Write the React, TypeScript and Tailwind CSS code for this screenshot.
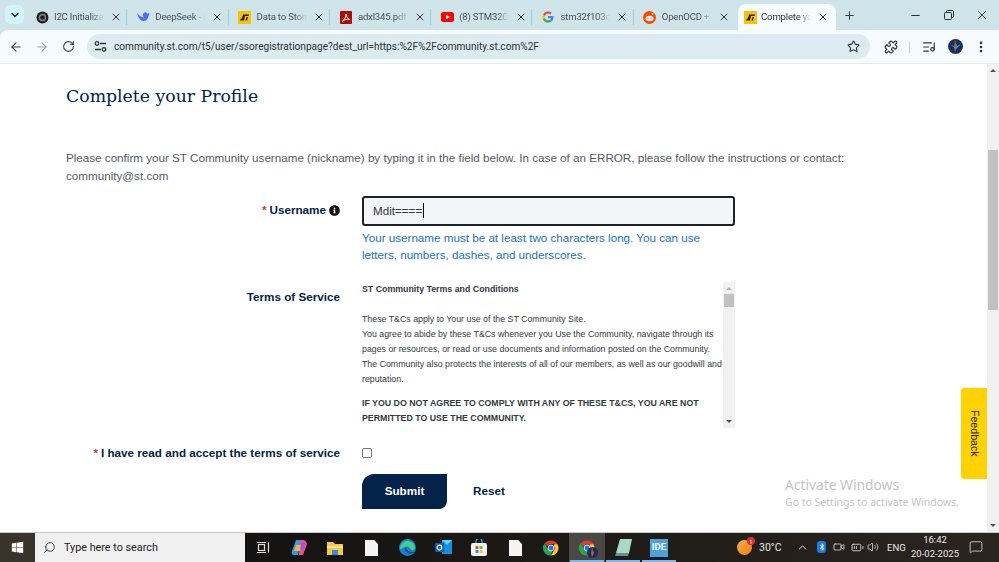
import React from 'react';
import {
  ArrowLeft, ArrowRight, ChevronDown, ChevronUp, ListMusic, Minus, MoreVertical, Plus, Puzzle,
  RotateCw, Search, Star, Volume2, X, MessageSquare, Video, BatteryMedium,
} from 'lucide-react';
import { FaInfoCircle, FaBluetoothB, FaWindows } from 'react-icons/fa';

const StLogo = () => (
  <svg width="13" height="13" viewBox="0 0 13 13">
    <rect width="13" height="13" fill="#f5c400" />
    <path d="M2 9.5 L6 9.5 L7 5 L10.5 5 L11 3.5 L5 3.5 L4 7.5 L3 7.5Z M7.5 9.5 L9 9.5 L10 6 L8.5 6Z" fill="#1c1c1c" />
  </svg>
);

const ChromeLogo = ({ size = 18 }: { size?: number }) => (
  <svg width={size} height={size} viewBox="0 0 24 24">
    <path d="M12 2a10 10 0 0 1 8.66 5H12a5 5 0 0 0-4.6 3L3.6 5.6A10 10 0 0 1 12 2z" fill="#e33b2e" />
    <path d="M20.66 7A10 10 0 0 1 12 22l4.3-7.5A5 5 0 0 0 16 9.5L16.3 7z" fill="#fcc934" />
    <path d="M3.6 5.6 7.9 13a5 5 0 0 0 6 2.4L12 22A10 10 0 0 1 3.6 5.6z" fill="#2ba24c" />
    <circle cx="12" cy="12" r="4.2" fill="#fff" />
    <circle cx="12" cy="12" r="3.3" fill="#1a73e8" />
  </svg>
);

const tabs = [
  {
    title: 'I2C Initializat',
    icon: (
      <svg width="13" height="13" viewBox="0 0 13 13">
        <circle cx="6.5" cy="6.5" r="6" fill="#1d1d1d" />
        <circle cx="6.5" cy="6.5" r="3" fill="none" stroke="#8a8a8a" strokeWidth="1.4" />
      </svg>
    ),
  },
  {
    title: 'DeepSeek - I',
    icon: (
      <svg width="14" height="12" viewBox="0 0 14 12">
        <path d="M1 2c1 3 2 7 6 8 3 .5 5-2 5.5-5 .3-1.500 1-2 1-3-1 .6-2 .6-2.500.2C10 1 8.500 1 7.500 2.500 6 4 7 6 8.500 6 7 7 4 6 1 2z" fill="#4d6bfe" />
      </svg>
    ),
  },
  { title: 'Data to Store', icon: <StLogo /> },
  {
    title: 'adxl345.pdf',
    icon: (
      <svg width="12" height="13" viewBox="0 0 12 13">
        <rect width="12" height="13" rx="1" fill="#b30b00" />
        <path d="M2.500 10c2-1 3.500-4 3.500-7 .5 3 2 5 3.500 5.500C7.500 8 4.500 8.500 2.500 10z" fill="none" stroke="#fff" strokeWidth="1" />
      </svg>
    ),
  },
  {
    title: '(8) STM32Cu',
    icon: (
      <svg width="13" height="10" viewBox="0 0 13 10">
        <rect width="13" height="10" rx="2.500" fill="#f00" />
        <path d="M5 2.800 9 5 5 7.200z" fill="#fff" />
      </svg>
    ),
  },
  {
    title: 'stm32f103c8',
    icon: (
      <svg width="12" height="12" viewBox="0 0 24 24">
        <path d="M23 12.300c0-.9-.1-1.600-.2-2.300H12v4.300h6.200c-.3 1.400-1.100 2.600-2.300 3.400l3.600 2.800c2.200-2 3.500-5 3.500-8.200z" fill="#4285f4" />
        <path d="M12 23c3 0 5.500-1 7.500-2.700l-3.600-2.800c-1 .7-2.300 1.100-3.900 1.100-3 0-5.500-2-6.400-4.700l-3.700 2.900C4.100 20.500 7.800 23 12 23z" fill="#34a853" />
        <path d="M5.600 13.900a6.800 6.800 0 0 1 0-4.200L1.900 6.800a11 11 0 0 0 0 10z" fill="#fbbc05" />
        <path d="M12 5.200c1.700 0 3.200.6 4.300 1.700l3.200-3.200C17.500 2 15 1 12 1 7.800 1 4.100 3.500 2.300 7l3.700 2.900C6.500 7.200 9 5.200 12 5.200z" fill="#ea4335" />
      </svg>
    ),
  },
  {
    title: 'OpenOCD +',
    icon: (
      <svg width="13" height="13" viewBox="0 0 13 13">
        <circle cx="6.500" cy="6.500" r="6.500" fill="#ff4500" />
        <ellipse cx="6.500" cy="7.500" rx="4" ry="2.800" fill="#fff" />
        <circle cx="5" cy="7" r=".7" fill="#ff4500" />
        <circle cx="8" cy="7" r=".7" fill="#ff4500" />
        <circle cx="9.500" cy="3" r=".9" fill="#fff" />
      </svg>
    ),
  },
];

const Tab = ({ title, icon, last }: { title: string; icon: React.ReactNode; last: boolean }) => (
  <div className="relative flex h-[26px] w-[101.3px] shrink-0 items-center pl-[9px] text-[#4a5357]">
    <div className="flex w-[14px] shrink-0 justify-center">{icon}</div>
    <span className="ml-[5px] w-[50px] whitespace-nowrap text-[9.600px] tracking-[-0.2px] [mask-image:linear-gradient(to_right,black_75%,transparent)]">
      {title}
    </span>
    <X size={12} strokeWidth={2} className="ml-[6px] shrink-0 text-[#2d3336]" />
    {!last && <div className="absolute right-0 top-[5px] h-[16px] w-[1px] bg-[#8fd0e4]" />}
  </div>
);

const TabStrip = () => (
  <div className="flex h-[30px] items-end font-['Roboto',sans-serif]">
    <div className="mb-[6px] ml-[5px] mr-[2px] flex h-[19px] w-[19px] shrink-0 items-center justify-center rounded-md bg-[#d3f4fd]">
      <ChevronDown size={12} strokeWidth={2.5} className="text-[#1f2a2e]" />
    </div>
    {tabs.map((t, i) => (
      <Tab key={t.title} title={t.title} icon={t.icon} last={i === tabs.length - 1} />
    ))}
    <div className="ml-[3px] flex h-[26px] w-[98px] shrink-0 items-center rounded-t-lg bg-[#f6fbfd] pl-[6px] text-[#30383b]">
      <StLogo />
      <span className="ml-[4px] w-[50px] whitespace-nowrap text-[9.600px] tracking-[-0.2px] [mask-image:linear-gradient(to_right,black_75%,transparent)]">
        Complete yo
      </span>
      <X size={12} strokeWidth={2} className="ml-[6px] shrink-0" />
    </div>
    <div className="flex h-[30px] w-[26px] items-center justify-center text-[#333b3f]">
      <Plus size={13} strokeWidth={2} />
    </div>
    <div className="flex h-[30px] flex-1 items-center justify-end text-[#2b3134]">
      <div className="flex w-[33.600px] justify-center"><Minus size={13} /></div>
      <div className="flex w-[33.600px] justify-center">
        <svg width="10" height="10" viewBox="0 0 10 10" fill="none" stroke="currentColor">
          <rect x=".5" y="2.500" width="7" height="7" rx="1" />
          <path d="M2.500 2.500V1.500a1 1 0 0 1 1-1h5a1 1 0 0 1 1 1v5a1 1 0 0 1-1 1h-1" />
        </svg>
      </div>
      <div className="flex w-[33.600px] justify-center"><X size={14} strokeWidth={1.500} /></div>
    </div>
  </div>
);

const Toolbar = () => (
  <div className="flex h-[34px] items-center rounded-tl-lg border-b border-[#e4eaec] bg-[#f6fbfd] font-['Roboto',sans-serif]">
    <ArrowLeft size={14} strokeWidth={2} className="ml-[9px] text-[#3b4346]" />
    <ArrowRight size={14} strokeWidth={2} className="ml-[12px] text-[#9aa3a6]" />
    <RotateCw size={13} strokeWidth={2} className="ml-[13px] text-[#3b4346]" />
    <div className="ml-[12px] flex h-[25px] w-[783px] shrink-0 items-center rounded-full bg-[#dcebef] pl-[7px] pr-[10px]">
      <svg width="13" height="11" viewBox="0 0 13 11" fill="none" stroke="#2f3639" strokeWidth="1.300">
        <circle cx="3" cy="2.500" r="1.800" />
        <path d="M6 2.500h6M1 8.500h6" />
        <circle cx="10" cy="8.500" r="1.800" />
      </svg>
      <span className="ml-[7px] text-[10.100px] whitespace-nowrap text-[#2b3236]">
        community.st.com/t5/user/ssoregistrationpage?dest_url=https:%2F%2Fcommunity.st.com%2F
      </span>
      <Star size={13} strokeWidth={2} className="ml-auto text-[#2b3236]" />
    </div>
    <Puzzle size={14} strokeWidth={2} className="ml-[14px] shrink-0 text-[#2f3639]" />
    <div className="ml-[11px] h-[12px] w-[1px] shrink-0 bg-[#a9e0f0]" />
    <ListMusic size={14} strokeWidth={2} className="ml-[12px] shrink-0 text-[#2f3639]" />
    <svg width="15" height="15" viewBox="0 0 15 15" className="ml-[12px] shrink-0">
      <circle cx="7.500" cy="7.500" r="7.500" fill="#15305f" />
      <path d="M7 1 9 7 7 14 6 8z" fill="#c2572e" />
      <path d="M2 5l5 3 6-3-5 5z" fill="#3aa0d8" />
    </svg>
    <MoreVertical size={14} strokeWidth={2.500} className="ml-[11px] shrink-0 text-[#2f3639]" />
  </div>
);

const TermsBox = () => (
  <div className="flex h-[146px] w-[373px] overflow-hidden font-['Liberation_Sans',sans-serif] text-[8.800px] leading-[15px] text-[#333a40]">
    <div className="w-[361px] shrink-0 overflow-hidden">
      <p className="mb-[15px] font-bold">ST Community Terms and Conditions</p>
      <p className="mb-[9px]">
        These T&amp;Cs apply to Your use of the ST Community Site.
        <br />
        You agree to abide by these T&amp;Cs whenever you Use the Community, navigate through its pages or resources, or read or use documents and information posted on the Community. The Community also protects the interests of all of our members, as well as our goodwill and reputation.
      </p>
      <p className="font-bold">IF YOU DO NOT AGREE TO COMPLY WITH ANY OF THESE T&amp;CS, YOU ARE NOT PERMITTED TO USE THE COMMUNITY.</p>
    </div>
    <div className="flex w-[12px] shrink-0 flex-col items-center bg-[#f1f1f1]">
      <div className="mt-[5px] h-0 w-0 border-x-[3px] border-b-[3px] border-x-transparent border-b-[#b5b5b5]" />
      <div className="mt-[4px] h-[13px] w-[10px] bg-[#c1c1c1]" />
      <div className="mb-[5px] mt-auto h-0 w-0 border-x-[3px] border-t-[3px] border-x-transparent border-t-[#505050]" />
    </div>
  </div>
);

const Form = () => (
  <div className="grid grid-cols-[274px_373px] gap-x-[22px] pt-[11px] font-['Liberation_Sans',sans-serif] text-[11.700px] text-[#03234b]">
    <label className="flex h-[30px] items-center justify-end pb-[2px] font-bold">
      <span className="mr-[3px] text-[#c0392b]">*</span>Username
      <FaInfoCircle size={11} className="ml-[3px] text-[#111]" />
    </label>
    <div className="flex h-[30px] items-center rounded-[3px] border-2 border-[#1c232b] bg-[#f3f5f6] pb-[1px] pl-[9px] text-[11.650px] text-[#30373d]">
      Mdit====<span className="ml-[0.5px] h-[15px] w-[1px] bg-black" />
    </div>
    <div />
    <p className="mt-[3px] h-[53px] text-[11.650px] leading-[17px] text-[#1c6fc2]">
      Your username must be at least two characters long. You can use letters, numbers, dashes, and underscores.
    </p>
    <label className="pt-[7px] text-right font-bold leading-[16px]">Terms of Service</label>
    <TermsBox />
    <label className="mt-[17px] flex h-[16px] items-center justify-end font-bold">
      <span className="mr-[3px] text-[#c0392b]">*</span>I have read and accept the terms of service
    </label>
    <div className="mt-[17px] flex h-[16px] items-center">
      <div className="h-[10px] w-[10px] rounded-[2px] border border-[#767676] bg-white" />
    </div>
    <div />
    <div className="mt-[13px] flex items-center">
      <button className="h-[35px] w-[85px] rounded-tl-[12px] rounded-br-[8px] bg-[#03234b] pb-[2px] font-bold text-white">Submit</button>
      <span className="ml-[26px] pb-[2px] font-bold">Reset</span>
    </div>
  </div>
);

const Page = () => (
  <div className="relative flex h-[468px] overflow-hidden bg-white">
    <div className="flex-1 pl-[66px]">
      <h1 className="pt-[19px] font-['DejaVu_Serif',serif] text-[17.300px] leading-[26px] text-[#03234b]">
        Complete your Profile
      </h1>
      <p className="mt-[40px] w-[800px] font-['Liberation_Sans',sans-serif] text-[11.650px] leading-[18px] text-[#525a63]">
        Please confirm your ST Community username (nickname) by typing it in the field below. In case of an ERROR, please follow the instructions or contact: community@st.com
      </p>
      <Form />
    </div>
    <div className="flex w-[12px] shrink-0 flex-col items-center bg-[#f1f1f1]">
      <div className="mt-[5px] h-0 w-0 border-x-[3px] border-b-[3px] border-x-transparent border-b-[#505050]" />
      <div className="mt-[78px] h-[160px] w-[10px] bg-[#c1c1c1]" />
      <div className="mb-[5px] mt-auto h-0 w-0 border-x-[3px] border-t-[3px] border-x-transparent border-t-[#505050]" />
    </div>
    <div className="absolute right-[12px] top-[324px] flex h-[91px] w-[26px] items-center justify-center rounded-l-[3px] bg-[#ffd200] font-['Liberation_Sans',sans-serif] text-[10.600px] text-[#222] [writing-mode:vertical-rl]">
      Feedback
    </div>
    <div className="absolute left-[785px] top-[411px] font-['Noto_Sans',sans-serif] text-[#c4c4c4]">
      <div className="text-[13.800px] leading-[19px]">Activate Windows</div>
      <div className="text-[10.500px] leading-[16px]">Go to Settings to activate Windows.</div>
    </div>
  </div>
);

const TaskIcon = ({ children, active, running }: { children: React.ReactNode; active?: boolean; running?: boolean }) => (
  <div className={`relative flex h-[29px] w-[36px] shrink-0 items-center justify-center ${active ? 'bg-[#4b4743]' : ''}`}>
    {children}
    {running && <div className="absolute bottom-0 left-[1px] right-[1px] h-[2px] bg-[#76b9ed]" />}
  </div>
);

const DocIcon = () => (
  <svg width="13" height="16" viewBox="0 0 13 16"><path d="M0 0h9l4 4v12H0z" fill="#f4f4f4" /></svg>
);

const Taskbar = () => (
  <div className="flex h-[30px] border-t border-[#c9c9c9] bg-gradient-to-r from-[#0f0f0f] via-[#1b1815] to-[#2b2520] font-['Roboto',sans-serif] text-[#e8e8e8]">
    <div className="flex h-[29px] w-[35px] shrink-0 items-center justify-center bg-[#39332c]">
      <FaWindows size={13} className="text-white" />
    </div>
    <div className="flex h-[29px] w-[210px] shrink-0 items-center bg-[#f0f0f0] pl-[8px] text-[#222]">
      <Search size={13} strokeWidth={1.500} className="-scale-x-100" />
      <span className="ml-[8px] mt-[1px] text-[10.800px]">Type here to search</span>
    </div>
    <TaskIcon>
      <svg width="13" height="13" viewBox="0 0 13 13" fill="none" stroke="#ddd" strokeWidth="1.200">
        <rect x="1.500" y="3.500" width="6" height="6" />
        <path d="M0 1.500h9M0 11.500h9M11.500 1.500v10" />
      </svg>
    </TaskIcon>
    <TaskIcon>
      <svg width="17" height="17" viewBox="0 0 17 17">
        <path d="M5 1h5L7 16H3C1 16 0 14 1 12z" fill="#2f9be8" />
        <path d="M9 1h3c2 0 3 1 4 4l-4 11H8z" fill="#e8538c" />
        <path d="M5 6h6l-2 6H3z" fill="#f4b13d" />
        <path d="M11 3l3 1-2 7-3-1z" fill="#8f5be8" />
      </svg>
    </TaskIcon>
    <TaskIcon>
      <svg width="16" height="14" viewBox="0 0 16 14">
        <path d="M0 1h6l2 2h8v11H0z" fill="#f6c845" />
        <rect x="0" y="5" width="16" height="2" fill="#fde49a" />
        <rect x="5" y="9" width="6" height="5" fill="#2e8fd8" />
      </svg>
    </TaskIcon>
    <TaskIcon><DocIcon /></TaskIcon>
    <TaskIcon>
      <svg width="17" height="17" viewBox="0 0 17 17">
        <circle cx="8.500" cy="8.500" r="8.500" fill="#1a7fd0" />
        <path d="M1 9c1-5 5-8 9-7 4 .8 6 3.500 6 7 0 2-2 2.500-4 2-1-2-3-4-5-3.500C4 8 1 12 1 9z" fill="#3fd08a" />
        <path d="M6 8c-1 3 1 6 5 6.500 2 .2 3.500-.5 4.500-2-3 1.500-7 0-8-3z" fill="#0e4f9e" />
      </svg>
    </TaskIcon>
    <TaskIcon>
      <svg width="17" height="15" viewBox="0 0 17 15">
        <path d="M7 0h10v14H7z" fill="#1490df" />
        <path d="M7 0h10L12 5z" fill="#50d9ff" />
        <rect x="0" y="3" width="9" height="9" rx="1" fill="#0a5fb4" />
        <circle cx="4.500" cy="7.500" r="2.300" fill="none" stroke="#fff" strokeWidth="1.200" />
      </svg>
    </TaskIcon>
    <TaskIcon>
      <svg width="16" height="17" viewBox="0 0 16 17">
        <path d="M5 4V2.500a3 3 0 0 1 6 0V4" fill="none" stroke="#2bb3e8" strokeWidth="1.200" />
        <rect y="4" width="16" height="13" rx="2" fill="#f4f4f4" />
        <rect x="4.500" y="7" width="3" height="3" fill="#e8523a" />
        <rect x="8.500" y="7" width="3" height="3" fill="#6fbf3e" />
        <rect x="4.500" y="11" width="3" height="3" fill="#2b9ce8" />
        <rect x="8.500" y="11" width="3" height="3" fill="#f5c23a" />
      </svg>
    </TaskIcon>
    <TaskIcon><DocIcon /></TaskIcon>
    <TaskIcon><ChromeLogo /></TaskIcon>
    <TaskIcon active running>
      <div className="relative">
        <ChromeLogo />
        <svg width="11" height="11" viewBox="0 0 11 11" className="absolute -bottom-[1px] -right-[2px]">
          <circle cx="5.500" cy="5.500" r="5.500" fill="#15305f" />
          <path d="M5 1 7 6 5 10 4 6z" fill="#c2572e" />
        </svg>
      </div>
    </TaskIcon>
    <TaskIcon running>
      <svg width="17" height="17" viewBox="0 0 17 17">
        <path d="M5 0h12l-3 14H1z" fill="#a8d8c8" />
        <path d="M1 14h13l-1 3H0z" fill="#6a8f86" />
      </svg>
    </TaskIcon>
    <TaskIcon running>
      <div className="flex h-[18px] w-[18px] items-center justify-center bg-[#4aa3e0] text-[9.500px] font-bold text-white">IDE</div>
    </TaskIcon>
    <div className="relative ml-[60px] flex h-[29px] w-[15px] shrink-0 items-center">
      <div className="h-[15px] w-[15px] rounded-full bg-gradient-to-br from-[#f7b23b] to-[#ef7d1a]" />
      <div className="absolute -right-[3px] top-[4px] flex h-[8px] w-[8px] items-center justify-center rounded-full bg-[#d9322e] text-[6px] text-white">1</div>
    </div>
    <span className="ml-[7px] w-[22px] shrink-0 whitespace-nowrap text-[10.500px] leading-[29px]">30°C</span>
    <ChevronUp size={13} strokeWidth={1.800} className="ml-[15px] mt-[8px] shrink-0" />
    <div className="ml-[8px] mt-[8px] flex h-[12px] w-[9px] shrink-0 items-center justify-center rounded-[3px] bg-[#1a7fe0]">
      <FaBluetoothB size={8} className="text-white" />
    </div>
    <Video size={12} strokeWidth={1.500} className="ml-[7px] mt-[8px] shrink-0" />
    <BatteryMedium size={13} strokeWidth={1.500} className="ml-[6px] mt-[8px] shrink-0" />
    <Volume2 size={12} strokeWidth={1.500} className="ml-[3px] mt-[8px] shrink-0" />
    <span className="ml-[8px] w-[17px] shrink-0 whitespace-nowrap text-[9.500px] leading-[29px]">ENG</span>
    <div className="ml-[9px] flex w-[44px] shrink-0 flex-col items-center whitespace-nowrap text-[9.500px] leading-[14px]">
      <span>16:42</span>
      <span>20-02-2025</span>
    </div>
    <MessageSquare size={14} strokeWidth={1.300} className="ml-[12px] mt-[7px] shrink-0" />
  </div>
);

export default function App() {
  return (
    <div className="h-[562px] w-[999px] overflow-hidden bg-[#cfe4e9]">
      <TabStrip />
      <Toolbar />
      <Page />
      <Taskbar />
    </div>
  );
}
